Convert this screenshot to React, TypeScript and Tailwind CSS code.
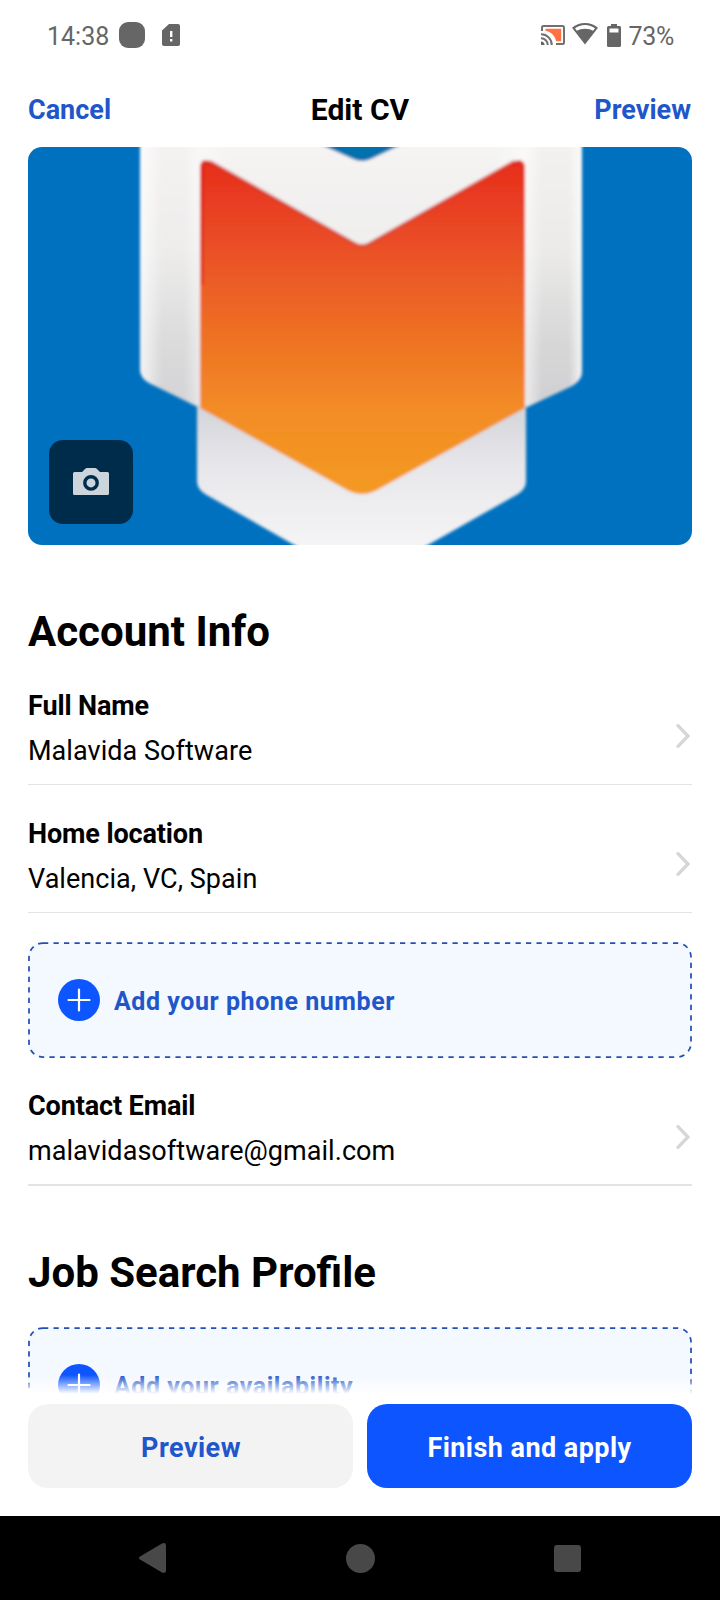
import type { ReactNode } from "react";

type FieldProps = {
  label: string;
  value: string;
  lineClassName?: string;
};

function StatusBar() {
  return (
    <div className="flex h-[72px] shrink-0 items-center justify-between pr-[46px] pl-[47px] text-[25px] leading-none text-[#666]">
      <div className="flex items-center">
        <span className="w-[72px]">14:38</span>
        <div className="mb-[2px] h-[26px] w-[26px] rounded-[9px] bg-[#666]" />
        <svg className="mb-[2px] ml-[17px] h-[22px] w-[18px]" viewBox="0 0 18 22" fill="#666">
          <path d="M7 0h9a2 2 0 0 1 2 2v18a2 2 0 0 1-2 2H2a2 2 0 0 1-2-2V6.5z" />
          <path d="M8 7h2.400v6H8zM8 15h2.400v2.400H8z" fill="#fff" />
        </svg>
      </div>
      <div className="flex items-center">
        <svg className="mb-[2px] h-5 w-6" viewBox="0 0 24 20" fill="none" stroke="#707070" strokeWidth="2">
          <path d="M4.500 3.800h15.700v12.400H15C14 10.500 10 7 4.500 5.800z" fill="#ff7043" stroke="none" />
          <path d="M1 6V2.500Q1 1 2.500 1h19Q23 1 23 2.500v15Q23 19 21.500 19H15" />
          <path d="M0 9.300A10.500 10.500 0 0 1 10.700 20M0 13.300A6.500 6.500 0 0 1 6.700 20" />
          <path d="M0 16.500A3.500 3.500 0 0 1 3.500 20H0z" fill="#666" stroke="none" />
        </svg>
        <svg className="mb-[4px] ml-[7px] h-[22px] w-[26px]" viewBox="0 0 26 22">
          <path d="M13 0C8 0 3.500 1.800 0 4.700L13 21.500 26 4.700C22.500 1.800 18 0 13 0z" fill="#666" />
          <path d="M13 2C9 2 5.600 3.300 3 5.200l1.900 2.500C7 6.400 9.800 5.700 13 5.700s6 .7 8.100 2L23 5.200C20.400 3.300 17 2 13 2z" fill="#fff" />
        </svg>
        <svg className="mb-[2px] ml-[9px] h-[23px] w-[14px]" viewBox="0 0 14 23">
          <path d="M4 0h6v2h2.500Q14 2 14 3.500v18Q14 23 12.500 23h-11Q0 23 0 21.500v-18Q0 2 1.500 2H4z" fill="#666" />
          <path d="M2.500 4.500h9v4h-9z" fill="#fff" />
        </svg>
        <span className="ml-[7px] tracking-[-0.3px]">73%</span>
      </div>
    </div>
  );
}

function CoverImage() {
  return (
    <svg className="h-full w-full" viewBox="0 0 664 398">
      <defs>
        <linearGradient id="shield" x1="0" y1="0" x2="0" y2="260" gradientUnits="userSpaceOnUse">
          <stop offset="0" stopColor="#f3f1f0" />
          <stop offset="0.4" stopColor="#ebeae9" />
          <stop offset="0.75" stopColor="#d7d7d7" />
          <stop offset="1" stopColor="#cfcfd3" />
        </linearGradient>
        <linearGradient id="tail" x1="0" y1="260" x2="0" y2="398" gradientUnits="userSpaceOnUse">
          <stop offset="0" stopColor="#d3d5da" />
          <stop offset="0.4" stopColor="#e6e5e9" />
          <stop offset="1" stopColor="#f5f4f5" />
        </linearGradient>
        <linearGradient id="flame" x1="0" y1="14" x2="0" y2="348" gradientUnits="userSpaceOnUse">
          <stop offset="0" stopColor="#e62d1c" />
          <stop offset="0.28" stopColor="#ea5228" />
          <stop offset="0.52" stopColor="#ee7023" />
          <stop offset="0.75" stopColor="#f38c26" />
          <stop offset="1" stopColor="#f39a1f" />
        </linearGradient>
        <linearGradient id="edge" x1="112" y1="0" x2="554" y2="0" gradientUnits="userSpaceOnUse">
          <stop offset="0" stopColor="#fff" stopOpacity="0.75" />
          <stop offset="0.05" stopColor="#fff" stopOpacity="0.1" />
          <stop offset="0.1" stopColor="#fff" stopOpacity="0.1" />
          <stop offset="0.135" stopColor="#fff" stopOpacity="0.5" />
          <stop offset="0.2" stopColor="#fff" stopOpacity="0.2" />
          <stop offset="0.8" stopColor="#fff" stopOpacity="0.2" />
          <stop offset="0.87" stopColor="#fff" stopOpacity="0.6" />
          <stop offset="0.91" stopColor="#fff" stopOpacity="0" />
          <stop offset="0.97" stopColor="#fff" stopOpacity="0" />
          <stop offset="1" stopColor="#fff" stopOpacity="0.75" />
        </linearGradient>
        <filter id="soft" x="-5%" y="-5%" width="110%" height="110%">
          <feGaussianBlur stdDeviation="1.500" />
        </filter>
      </defs>
      <path d="M0 0h664v398H0z" fill="#0071bf" />
      <g filter="url(#soft)">
        <path d="M112-10v232q0 9 9 14l51 25h325l45-21q12-6 12-15V-10z" fill="url(#shield)" />
        <path d="M112-10v232q0 9 9 14l51 25h325l45-21q12-6 12-15V-10z" fill="url(#edge)" />
        <path d="M169 258v76q0 8 8 13l105 60h102l106-60q8-5 8-13v-76L334 344z" fill="url(#tail)" />
        <path d="M276-10l49 22q9 4 18 0l46-22z" fill="#0071ad" />
        <path
          d="M172 21q0-11 11-6l143 81q8 5 16 0l143-81q12-5 12 6v240L349 343q-15 8-30 0L172 261z"
          fill="url(#flame)"
        />
        <path d="M174 15l9 0 143 81q8 5 16 0l143-81h8" fill="none" stroke="#c5241a" strokeOpacity="0.5" strokeWidth="3" />
        <path d="M174 18v120" fill="none" stroke="#d81808" strokeOpacity="0.4" strokeWidth="4" />
      </g>
    </svg>
  );
}

function CameraButton() {
  return (
    <button
      type="button"
      aria-label="Change photo"
      className="absolute bottom-[21px] left-[21px] flex h-[84px] w-[84px] items-center justify-center rounded-[14px] bg-[#002c4b]"
    >
      <svg className="mb-[2px] h-[27px] w-9" viewBox="0 0 36 27">
        <path
          d="M12 1q1-1 2-1h8q1 0 2 1l3 3h7.500Q36 4 36 5.500v20Q36 27 34.500 27h-33Q0 27 0 25.500v-20Q0 4 1.500 4H9z"
          fill="#ccd5db"
        />
        <circle cx="18" cy="14.900" r="6.200" fill="none" stroke="#002c4b" strokeWidth="3.400" />
      </svg>
    </button>
  );
}

function SectionTitle({ children }: { children: ReactNode }) {
  return <h2 className="text-[42px] leading-[50px] font-bold whitespace-nowrap">{children}</h2>;
}

function Field({ label, value, lineClassName = "border-b" }: FieldProps) {
  return (
    <div className={`flex h-[105px] items-center justify-between border-[#e3e3e3] ${lineClassName}`}>
      <div className="flex flex-col pb-[7px] text-[27px] leading-[45px]">
        <span className="font-bold tracking-[-0.120px]">{label}</span>
        <span className="tracking-[0.050px]">{value}</span>
      </div>
      <svg className="mt-2 mr-[2px] h-6 w-[14px]" viewBox="0 0 14 24" fill="none" stroke="#d6d6d6" strokeWidth="3.300" strokeLinecap="round">
        <path d="M2 1.700L12 12 2 22.300" />
      </svg>
    </div>
  );
}

function AddCard({ label }: { label: string }) {
  return (
    <button type="button" className="relative flex h-[116px] w-full shrink-0 items-center rounded-[14px] bg-[#f4f8ff] pl-[30px]">
      <svg className="absolute inset-0 h-full w-full" viewBox="0 0 664 116" fill="none">
        <rect x="1" y="1" width="662" height="114" rx="14" stroke="#2450b4" strokeWidth="1.750" strokeDasharray="5.250 5.250" />
      </svg>
      <svg className="h-[42px] w-[42px]" viewBox="0 0 42 42">
        <circle cx="21" cy="21" r="21" fill="#0d55ff" />
        <path d="M21 10.500v21M10.500 21h21" stroke="#fff" strokeWidth="2.200" strokeLinecap="round" />
      </svg>
      <span className="mt-[3px] ml-[14px] text-[25px] leading-none font-bold tracking-[0.550px] text-[#2156cb]">{label}</span>
    </button>
  );
}

export default function App() {
  return (
    <div className="flex h-[1600px] w-[720px] flex-col overflow-hidden bg-white font-['Roboto',sans-serif] text-black">
      <StatusBar />
      <header className="grid h-[75px] shrink-0 grid-cols-3 items-center px-7 pt-[2px] text-[27px] font-bold text-[#2156cb]">
        <span className="text-left">Cancel</span>
        <h1 className="pb-[2px] text-center text-[30px] text-black">Edit CV</h1>
        <span className="pr-px text-right">Preview</span>
      </header>

      <main className="relative flex h-[1257px] shrink-0 flex-col overflow-hidden px-7">
        <div className="relative h-[398px] shrink-0 overflow-hidden rounded-[14px]">
          <CoverImage />
          <CameraButton />
        </div>

        <div className="mt-[62px]">
          <SectionTitle>Account Info</SectionTitle>
        </div>
        <div className="mt-[23px]">
          <Field label="Full Name" value="Malavida Software" />
        </div>
        <div className="mt-[23px]">
          <Field label="Home location" value="Valencia, VC, Spain" />
        </div>
        <div className="mt-[29px]">
          <AddCard label="Add your phone number" />
        </div>
        <div className="mt-[23px]">
          <Field label="Contact Email" value="malavidasoftware@gmail.com" lineClassName="border-b-2" />
        </div>
        <div className="mt-[62px]">
          <SectionTitle>Job Search Profile</SectionTitle>
        </div>
        <div className="mt-[29px]">
          <AddCard label="Add your availability" />
        </div>
        {/* fades the list out behind the action buttons */}
        <div className="absolute inset-x-0 bottom-0 h-[29px] bg-linear-to-b from-white/0 to-white to-65%" />
      </main>

      <footer className="grid h-[112px] shrink-0 grid-cols-2 items-start gap-[14px] px-7 text-[27px] font-bold tracking-[0.450px]">
        <button type="button" className="h-[84px] rounded-[20px] bg-[#f3f3f3] pt-[5px] pl-px text-[#2156cb]">
          Preview
        </button>
        <button type="button" className="h-[84px] rounded-[20px] bg-[#0d55ff] pt-[5px] text-white">
          Finish and apply
        </button>
      </footer>

      <nav className="flex h-[84px] shrink-0 items-center justify-between bg-black pr-[139px] pl-[139px]">
        <svg className="h-[30px] w-[27px]" viewBox="0 0 27 30">
          <path d="M1 13.500L23 .6q4-1.600 4 2v24.800q0 3.600-4 2L1 16.500q-2-1.500 0-3z" fill="#484848" />
        </svg>
        <div className="h-[29px] w-[29px] rounded-full bg-[#484848]" />
        <div className="h-[27px] w-[27px] rounded-[3px] bg-[#484848]" />
      </nav>
    </div>
  );
}
